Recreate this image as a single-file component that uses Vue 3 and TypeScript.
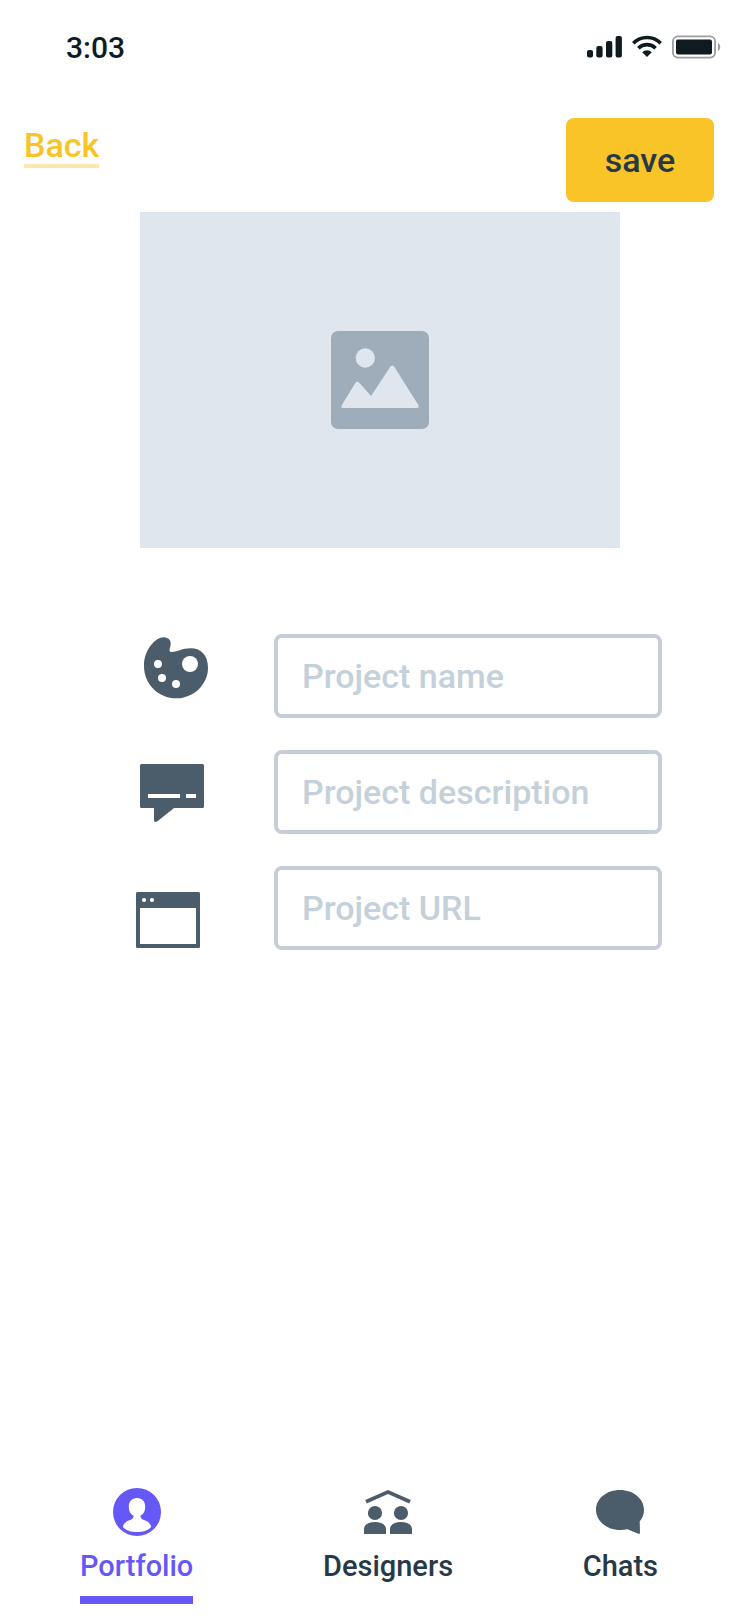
<script setup lang="ts">
import { reactive, ref } from 'vue'

type FieldKey = 'name' | 'description' | 'url'
type TabKey = 'portfolio' | 'designers' | 'chats'

const fields: { key: FieldKey; label: string; type: string }[] = [
  { key: 'name', label: 'Project name', type: 'text' },
  { key: 'description', label: 'Project description', type: 'text' },
  { key: 'url', label: 'Project URL', type: 'url' },
]

const tabs: { key: TabKey; label: string }[] = [
  { key: 'portfolio', label: 'Portfolio' },
  { key: 'designers', label: 'Designers' },
  { key: 'chats', label: 'Chats' },
]

const project = reactive<Record<FieldKey, string>>({ name: '', description: '', url: '' })
const activeTab = ref<TabKey>('portfolio')
</script>

<template>
  <div class="screen">
    <div class="status">
      <span class="time">3:03</span>
      <div class="indicators">
        <svg width="35" height="24" viewBox="0 0 35 24" fill="#101a21" aria-hidden="true">
          <rect x="0" y="15" width="6" height="7.5" rx="2" />
          <rect x="9.3" y="11" width="6.3" height="11.5" rx="2" />
          <rect x="19" y="6" width="6.3" height="16.5" rx="2" />
          <rect x="28.6" y="1" width="6.3" height="21.5" rx="2" />
        </svg>
        <svg width="30" height="24" viewBox="0 0 30 24" aria-hidden="true">
          <g fill="none" stroke="#101a21" stroke-width="3.6">
            <path d="M1.3 8.2a19.4 19.4 0 0 1 27.4 0" />
            <path d="M6.4 13.2a12.2 12.2 0 0 1 17.2 0" />
          </g>
          <path d="M10.2 17.2a6.8 6.8 0 0 1 9.6 0L15 22z" fill="#101a21" />
        </svg>
        <svg width="49" height="24" viewBox="0 0 49 24" aria-hidden="true">
          <rect x="0.9" y="1.4" width="42.2" height="21.2" rx="5" fill="none" stroke="#9d9d9f" stroke-width="1.8" />
          <rect x="4" y="4.5" width="36" height="15" rx="2" fill="#101a21" />
          <path d="M46 8c3 1.5 3 6.5 0 8z" fill="#9d9d9f" />
        </svg>
      </div>
    </div>

    <header class="header">
      <a class="back" href="#back">Back</a>
      <button class="save" type="submit" form="project-form">save</button>
    </header>

    <main>
      <div class="preview">
        <svg class="picture" viewBox="0 0 98 98" role="img" aria-label="Project image">
          <rect width="98" height="98" rx="7" fill="#9eadb9" />
          <g fill="#dfe6ee">
            <circle cx="34.3" cy="27" r="9.7" />
            <path d="M10.6 74.5 24.1 52.3q1.800-2.600 4.200-.6L40 65 59.300 35.700q2-2.200 4 0L87.500 74.300q1 2.600-1.400 2.700H11.800q-2-.1-1.200-2.500z" />
          </g>
        </svg>
      </div>

      <form id="project-form" class="form" @submit.prevent>
        <div v-for="field in fields" :key="field.key" class="row">
          <label :for="field.key" :aria-label="field.label">
            <svg class="field-icon" viewBox="0 0 84 84" fill="#4b5c6a" aria-hidden="true">
              <g v-if="field.key === 'name'">
                <path d="M38.700 9.500C38.700 5.500 35.500 3.300 31.500 3.300C24 3.300 12 15 12 32C12 50.500 26.500 64.300 44.500 64.300C62 64.300 76 50 76 34C76 21.500 69.500 14.300 58.500 14.300C50.500 14.300 46 17.800 39.500 18C37.300 18 37.300 16.700 37.700 14.800Q38.700 11.800 38.700 9.500Z" />
                <g fill="#fff">
                  <circle cx="58" cy="30" r="8" />
                  <circle cx="26" cy="30" r="4" />
                  <circle cx="30" cy="44" r="4" />
                  <circle cx="44" cy="50" r="4" />
                </g>
              </g>
              <g v-else-if="field.key === 'description'">
                <path d="M9.500 14h61q1.500 0 1.500 1.500v41q0 1.500-1.500 1.500H42L25.500 71.200Q22 73 22 70V58H9.500Q8 58 8 56.500v-41Q8 14 9.500 14z" />
                <path d="M16 44h32v4H16zM54 44h10v4H54z" fill="#fff" />
              </g>
              <g v-else>
                <rect x="4" y="26" width="64" height="56" rx="1.5" />
                <path d="M8 42h56v36H8z" fill="#fff" />
                <circle cx="12" cy="34" r="2.1" fill="#fff" />
                <circle cx="20" cy="34" r="2.1" fill="#fff" />
              </g>
            </svg>
          </label>
          <input :id="field.key" v-model="project[field.key]" :type="field.type" :placeholder="field.label" />
        </div>
      </form>
    </main>

    <nav class="tabs">
      <a
        v-for="tab in tabs"
        :key="tab.key"
        class="tab"
        :class="{ active: tab.key === activeTab }"
        :href="'#' + tab.key"
        @click.prevent="activeTab = tab.key"
      >
        <svg width="48" height="48" viewBox="0 0 48 48" aria-hidden="true">
          <g v-if="tab.key === 'portfolio'">
            <circle class="tab-icon" cx="24" cy="24" r="24" />
            <path d="M24 10C29.400 10 32.200 13.700 32.200 19C32.200 23 30.800 26 27.400 27.700C27.400 30.500 29.200 31.300 32.300 32.500C36 34 38 36.500 38 39.200C34.500 42.800 29.500 44 24 44C18.500 44 13.500 42.800 10 39.200C10 36.500 12 34 15.700 32.500C18.800 31.300 20.600 30.500 20.600 27.700C17.200 26 15.800 23 15.800 19C15.800 13.700 18.600 10 24 10Z" fill="#fff" />
          </g>
          <g v-else-if="tab.key === 'designers'" class="tab-icon">
            <path d="M24 2 46.800 12 45.300 15.500 24 6 2.700 15.500 1.200 12z" />
            <circle cx="11" cy="25" r="7.1" />
            <circle cx="37" cy="25" r="7.1" />
            <path d="M0 46v-5c0-4.500 5-7 11-7s11 2.500 11 7v5zM26 46v-5c0-4.500 5-7 11-7s11 2.500 11 7v5z" />
          </g>
          <path v-else class="tab-icon" d="M24 2c13.300 0 24 8.700 24 19.800c0 4.300-1.500 8.300-4.300 11.600L44 44.500q0 1.800-1.700 1.300L31.500 41.200Q28 42 24 42C10.700 42 0 33 0 21.800S10.700 2 24 2z" />
        </svg>
        <span>{{ tab.label }}</span>
      </a>
    </nav>
  </div>
</template>

<style>
body {
  margin: 0;
  background: #fff;
}
</style>

<style scoped>
.screen {
  display: flex;
  flex-direction: column;
  box-sizing: border-box;
  min-height: 100vh;
  font-family: Roboto, "Liberation Sans", sans-serif;
  font-weight: 500;
  color: #273947;
}

.status {
  display: flex;
  align-items: center;
  justify-content: space-between;
  height: 94px;
  padding: 0 31px 0 66px;
}

.time {
  font-size: 30px;
  color: #101a21;
}

.indicators {
  display: flex;
  gap: 10px;
}

.header {
  display: flex;
  align-items: flex-start;
  justify-content: space-between;
  padding: 24px 38px 10px 24px;
}

.back {
  padding-top: 8px;
  border-bottom: 4px solid #fde7ad;
  font-size: 34px;
  line-height: 38px;
  color: #f8c427;
  text-decoration: none;
}

.save {
  min-width: 148px;
  height: 84px;
  padding: 0 32px;
  border: 0;
  border-radius: 8px;
  background: #f8c427;
  font: inherit;
  font-size: 34px;
  color: #273947;
}

.preview {
  display: grid;
  place-items: center;
  aspect-ratio: 10 / 7;
  margin: 0 132px 0 140px;
  background: #dfe6ee;
}

.picture {
  width: 98px;
}

.form {
  display: flex;
  flex-direction: column;
  gap: 32px;
  padding: 86px 90px 32px 132px;
}

.row {
  display: flex;
  gap: 58px;
}

.field-icon {
  display: block;
  width: 84px;
  height: 84px;
}

input {
  flex: 1;
  min-width: 0;
  height: 84px;
  box-sizing: border-box;
  padding: 0 24px;
  border: 4px solid #c5ced8;
  border-radius: 8px;
  background: #fff;
  font: inherit;
  font-size: 34px;
  color: #273947;
}

input::placeholder {
  color: #c4d0da;
  opacity: 1;
}

.tabs {
  display: flex;
  justify-content: space-between;
  margin-top: auto;
  padding: 0 94px 20px 80px;
}

.tab {
  display: flex;
  flex-direction: column;
  align-items: center;
  gap: 12px;
  border-bottom: 8px solid transparent;
  font-size: 29px;
  line-height: 36px;
  color: inherit;
  text-decoration: none;
}

.tab span {
  padding-bottom: 12px;
}

.tab-icon {
  fill: #4b5c6a;
}

.active {
  border-color: #6658f6;
  color: #6658f6;
}

.active .tab-icon {
  fill: #6658f6;
}
</style>
